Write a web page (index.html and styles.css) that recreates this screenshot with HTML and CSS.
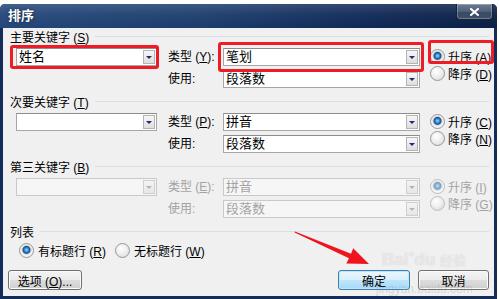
FILE: index.html
```html
<!DOCTYPE html>
<html lang="zh-CN">
<head>
  <meta charset="UTF-8" />
  <title>排序</title>
  <link rel="stylesheet" href="styles.css">
</head>
<body>
  <div class="screen">
    <div class="dialog">
      <div class="titlebar">
        <span class="title">排序</span>
        <span class="close">
          <svg width="9" height="8" viewBox="0 0 9 8"><path d="M1 1 L8 7 M8 1 L1 7" stroke="#fff" stroke-width="2" stroke-linecap="square"/></svg>
        </span>
      </div>
      <div class="content">
        <div class="section">
          <div class="sec-head"><span>主要关键字 (<u>S</u>)</span></div>
          <div class="key-grid">
            <div class="combo"><span>姓名</span><i class="drop"></i></div>
            <div class="lbl">类型 (<u>Y</u>):</div>
            <div class="combo"><span>笔划</span><i class="drop"></i></div>
            <div class="radios">
              <div class="radio on"><span>升序 (<u>A</u>)</span></div>
              <div class="radio"><span>降序 (<u>D</u>)</span></div>
            </div>
            <div class="lbl row2">使用:</div>
            <div class="combo row2"><span>段落数</span><i class="drop"></i></div>
          </div>
        </div>
        <div class="section">
          <div class="sec-head"><span>次要关键字 (<u>T</u>)</span></div>
          <div class="key-grid">
            <div class="combo"><span></span><i class="drop"></i></div>
            <div class="lbl">类型 (<u>P</u>):</div>
            <div class="combo"><span>拼音</span><i class="drop"></i></div>
            <div class="radios">
              <div class="radio on"><span>升序 (<u>C</u>)</span></div>
              <div class="radio"><span>降序 (<u>N</u>)</span></div>
            </div>
            <div class="lbl row2">使用:</div>
            <div class="combo row2"><span>段落数</span><i class="drop"></i></div>
          </div>
        </div>
        <div class="section off">
          <div class="sec-head"><span>第三关键字 (<u>B</u>)</span></div>
          <div class="key-grid">
            <div class="combo"><span></span><i class="drop"></i></div>
            <div class="lbl">类型 (<u>E</u>):</div>
            <div class="combo"><span>拼音</span><i class="drop"></i></div>
            <div class="radios">
              <div class="radio on"><span>升序 (<u>I</u>)</span></div>
              <div class="radio"><span>降序 (<u>G</u>)</span></div>
            </div>
            <div class="lbl row2">使用:</div>
            <div class="combo row2"><span>段落数</span><i class="drop"></i></div>
          </div>
        </div>
        <div class="section">
          <div class="sec-head"><span>列表</span></div>
          <div class="list-row">
            <div class="radio on"><span>有标题行 (<u>R</u>)</span></div>
            <div class="radio"><span>无标题行 (<u>W</u>)</span></div>
          </div>
        </div>
        <div class="buttons">
          <button class="btn">选项 (<u>O</u>)...</button>
          <span class="spacer"></span>
          <button class="btn default">确定</button>
          <button class="btn">取消</button>
        </div>
      </div>
    </div>

    <!-- annotations drawn over the screenshot -->
    <div class="mark m1"></div>
    <div class="mark m2"></div>
    <div class="mark m3"></div>
    <svg class="arrow" width="500" height="299" viewBox="0 0 500 299">
      <polygon points="295,231.5 351,253.7 353.2,248.2 369,264 346.3,263.6 349,258.3 294.6,232.6" fill="#f0141e"/>
    </svg>
    <div class="watermark">
      <div class="wm-top">Bai<span class="paw">●</span>du <span class="wm-box">经验</span></div>
      <div class="wm-url">jingyan.baidu.com</div>
    </div>
  </div>
</body>
</html>
```

FILE: styles.css
```css
* {
  box-sizing: border-box;
}
body {
  margin: 0;
  background: #fff;
  font-family: "Liberation Sans", "Noto Sans CJK SC", sans-serif;
  font-size: 12px;
  color: #000;
}
u {
  text-decoration: underline;
  text-underline-offset: 1px;
}
.screen {
  position: relative;
  width: 500px;
  height: 299px;
  overflow: hidden;
  padding-top: 4px;
}
.dialog {
  width: 497px;
  height: 295px;
  display: flex;
  flex-direction: column;
  background: #132c5a;
  padding: 0 3px 3px;
  border-radius: 5px 5px 0 0;
}
.titlebar {
  height: 24px;
  margin: 0 -3px;
  padding-left: 8px;
  padding-right: 4px;
  display: flex;
  align-items: flex-start;
  justify-content: space-between;
  border-radius: 5px 5px 0 0;
  background:
    linear-gradient(180deg, rgba(255,255,255,0.14) 0%, rgba(255,255,255,0.04) 45%, rgba(0,0,0,0) 100%),
    linear-gradient(90deg, #24477a 0%, #1c3d6d 40%, #0f2856 75%, #0a1f45 100%);
}
.title {
  color: #fff;
  font-weight: bold;
  font-size: 13px;
  line-height: 23px;
  text-shadow: 0 0 3px rgba(0, 0, 0, 0.6);
}
.close {
  width: 37px;
  height: 16px;
  display: flex;
  align-items: center;
  justify-content: center;
  border: 1px solid #1a2538;
  border-top: none;
  border-radius: 0 0 4px 4px;
  background: linear-gradient(180deg, #6d7d93 0%, #4f6079 50%, #3a4a62 51%, #3c5068 100%);
  box-shadow: inset 0 0 0 1px rgba(255, 255, 255, 0.25);
}
.content {
  flex: 1;
  background: #f0f0f0;
  padding: 1px 5px 6px 5px;
  display: flex;
  flex-direction: column;
}
.section + .section {
  margin-top: 6px;
}
.sec-head {
  height: 14px;
  display: flex;
  align-items: center;
  padding-left: 2px;
  margin-bottom: 5px;
  white-space: nowrap;
}
.sec-head::after {
  content: "";
  flex: 1;
  margin-left: 6px;
  border-top: 1px solid #d5dfe5;
}
.key-grid {
  display: grid;
  grid-template-columns: 141px 66px 197px 1fr;
  grid-template-rows: 18px 18px;
  row-gap: 4px;
  margin-left: 8px;
}
.combo {
  display: flex;
  align-items: center;
  justify-content: space-between;
  height: 18px;
  background: #fff;
  border: 1px solid #a6a6a6;
  border-top-color: #8c8c8c;
  padding-left: 2px;
  padding-right: 1px;
}
.combo span {
  line-height: 16px;
  font-size: 13px;
}
.drop {
  width: 12px;
  height: 14px;
  display: flex;
  align-items: center;
  justify-content: center;
  border: 1px solid #b3b3b3;
  background: linear-gradient(180deg, #f7f7f7, #dedede);
}
.drop::before {
  content: "";
  border-left: 3px solid transparent;
  border-right: 3px solid transparent;
  border-top: 3px solid #1c2b78;
  margin-top: 1px;
}
.lbl {
  padding-left: 11px;
  line-height: 18px;
  white-space: nowrap;
}
.row2.lbl {
  grid-column: 2;
  grid-row: 2;
}
.row2.combo {
  grid-column: 3;
  grid-row: 2;
}
.radios {
  grid-column: 4;
  grid-row: 1 / span 2;
  padding-left: 10px;
  padding-top: 1px;
  display: flex;
  flex-direction: column;
  gap: 3px;
}
.radio {
  display: flex;
  align-items: center;
  gap: 3px;
  height: 14px;
  white-space: nowrap;
}
.radio::before {
  content: "";
  flex: none;
  width: 13px;
  height: 13px;
  border-radius: 50%;
  border: 1px solid #969696;
  background: radial-gradient(circle at 40% 35%, #ffffff 0, #f1f1f1 40%, #d6d6d6 100%);
}
.radio.on::before {
  background: radial-gradient(circle at 50% 45%, #a8dcf8 0, #3a8bd0 2px, #14508f 3.5px, #dcdcdc 4.5px, #f5f5f5 6px);
}
.off .combo {
  background: #f6f6f6;
  border-color: #c9c9c9;
  color: #a3a3a3;
}
.off .drop {
  border-color: #cfcfcf;
  background: linear-gradient(180deg, #f4f4f4, #e6e6e6);
}
.off .drop::before {
  border-top-color: #b5b5b5;
}
.off .lbl,
.off .radio {
  color: #a3a3a3;
}
.off .radio::before {
  border-color: #bdbdbd;
}
.off .radio.on::before {
  background: radial-gradient(circle at 50% 45%, #cfe6f3 0, #8ab6d6 2px, #79a3c4 3.5px, #e4e4e4 4.5px, #f7f7f7 6px);
}
.list-row {
  display: flex;
  gap: 9px;
  margin-top: 3px;
  margin-left: 11px;
}
.list-row .radio {
  gap: 4px;
}
.buttons {
  margin-top: auto;
  display: flex;
  gap: 8px;
}
.spacer {
  flex: 1;
}
.btn {
  height: 20px;
  padding: 0;
  font-family: inherit;
  font-size: 12px;
  color: #000;
  border: 1px solid #707070;
  border-radius: 3px;
  background: linear-gradient(180deg, #f3f3f3 0%, #ebebeb 50%, #dddddd 51%, #cfcfcf 100%);
  box-shadow: inset 0 0 0 1px #fbfbfb;
}
.btn:first-child {
  width: 74px;
}
.btn:nth-child(3) {
  width: 72px;
}
.btn:last-child {
  width: 71px;
}
.btn.default {
  border-color: #3c7fb1;
  background: linear-gradient(180deg, #eaf6fd 0%, #d9f0fc 50%, #bee6fd 51%, #a7d9f5 100%);
  box-shadow: inset 0 0 0 1px #bfe5fb;
}
.mark {
  position: absolute;
  border: 3px solid #ee1c24;
  border-radius: 3px;
}
.m1 {
  left: 10px;
  top: 45px;
  width: 149px;
  height: 24px;
}
.m2 {
  left: 218px;
  top: 42px;
  width: 206px;
  height: 30px;
}
.m3 {
  left: 428px;
  top: 40px;
  width: 66px;
  height: 24px;
}
.arrow {
  position: absolute;
  left: 0;
  top: 0;
}
.watermark {
  position: absolute;
  left: 382px;
  top: 244px;
  pointer-events: none;
}
.wm-top {
  font-family: "Liberation Sans", sans-serif;
  font-size: 17px;
  font-weight: bold;
  color: rgba(255, 255, 255, 0.6);
  text-shadow: 0 0 1px rgba(110, 110, 110, 0.35);
  line-height: 20px;
}
.paw {
  font-size: 10px;
  vertical-align: 8px;
}
.wm-box {
  font-family: "Noto Sans CJK SC", sans-serif;
  font-size: 13px;
  font-weight: normal;
}
.wm-url {
  margin-top: 12px;
  margin-left: -6px;
  font-family: "Liberation Sans", sans-serif;
  font-size: 12px;
  color: rgba(150, 150, 150, 0.3);
}
```
